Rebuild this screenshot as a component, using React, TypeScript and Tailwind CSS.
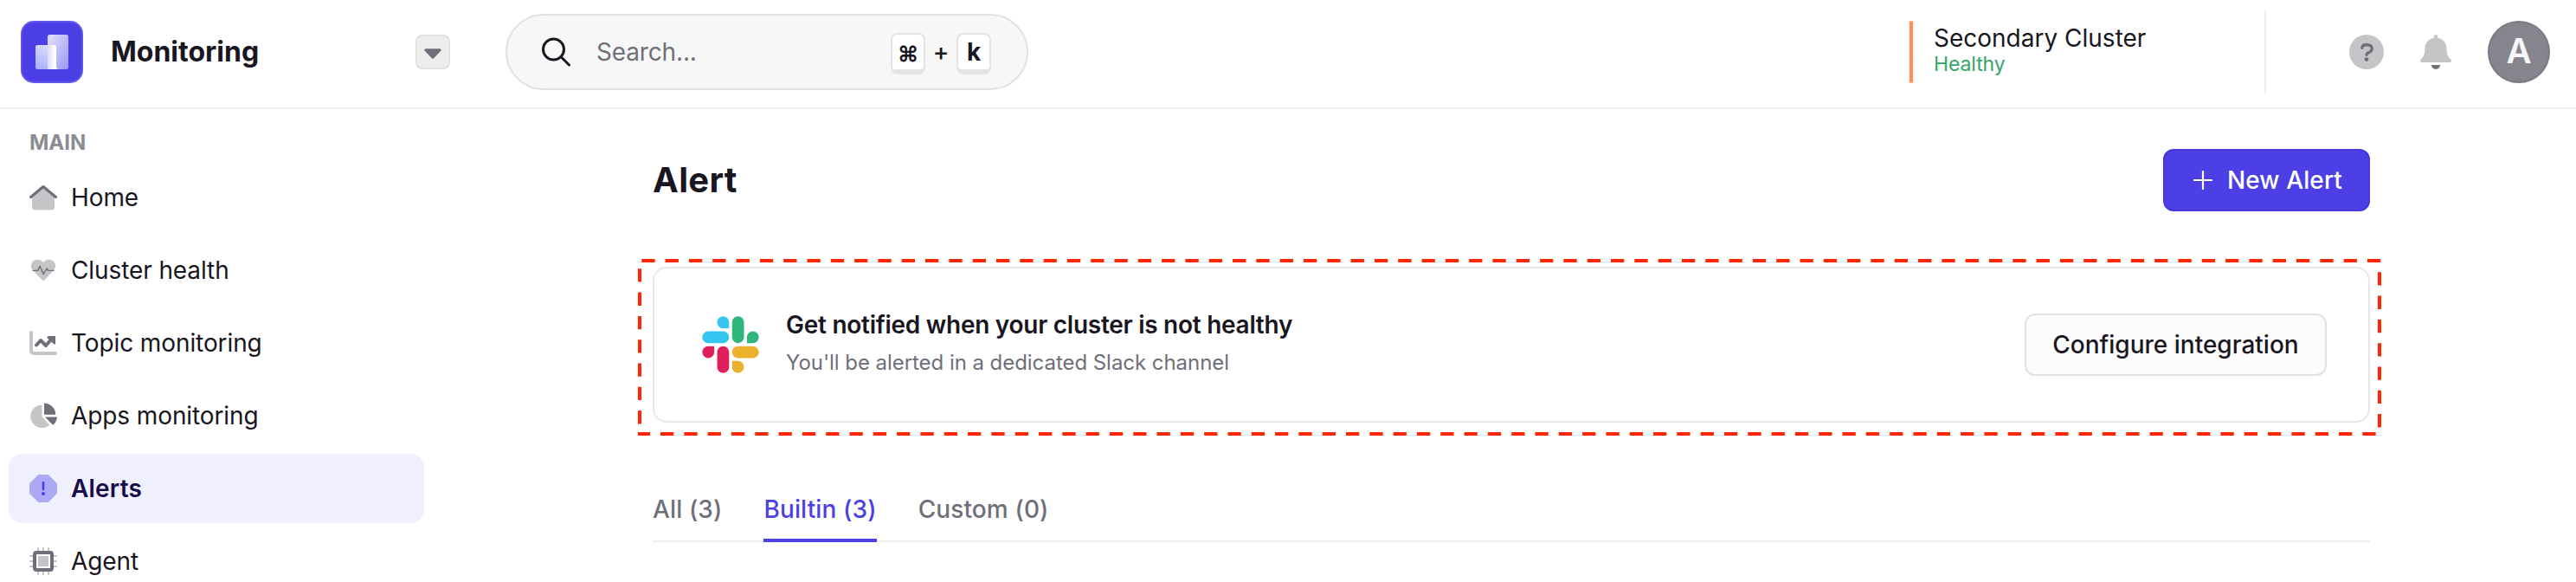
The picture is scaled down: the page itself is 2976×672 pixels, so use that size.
import React from "react";

const DARK = "#6f6f7a";
const LIGHT = "#c5c5c7";

function Logo() {
  return (
    <svg width="72" height="72" viewBox="0 0 72 72">
      <defs>
        <linearGradient id="lgA" x1="0" y1="0" x2="1" y2="1">
          <stop offset="0" stopColor="#e0e0fd" />
          <stop offset="1" stopColor="#9d99f3" />
        </linearGradient>
        <linearGradient id="lgB" x1="0.8" y1="0" x2="0.3" y2="1">
          <stop offset="0" stopColor="#e2e2fe" />
          <stop offset="1" stopColor="#aab2fb" />
        </linearGradient>
        <linearGradient id="lgC" x1="0" y1="0" x2="1" y2="0">
          <stop offset="0" stopColor="#dcdcfc" />
          <stop offset="0.7" stopColor="#ffffff" />
        </linearGradient>
      </defs>
      <rect width="72" height="72" rx="15" fill="#6357e9" />
      <rect x="2" y="2" width="68" height="68" rx="13" fill="#4c3fe5" />
      <rect x="31" y="16" width="24" height="40" rx="2.5" fill="url(#lgA)" />
      <rect x="17" y="28" width="24" height="28" rx="2.5" fill="url(#lgB)" />
      <path d="M31 28h7.500a2.500 2.500 0 0 1 2.500 2.500V54l2 2H33.500a2.500 2.500 0 0 1-2.500-2.500z" fill="url(#lgC)" />
    </svg>
  );
}

function HomeIcon() {
  return (
    <svg width="32" height="32" viewBox="0 0 32 32">
      <path d="M16 5 29 16v10.500a4 4 0 0 1-4 4H7a4 4 0 0 1-4-4V16z" fill={LIGHT} />
      <path d="M1.600 15.500 16 3.500 30.400 15.500" fill="none" stroke={DARK} strokeWidth="3.200" strokeLinecap="round" strokeLinejoin="round" />
    </svg>
  );
}

function HeartIcon() {
  return (
    <svg width="32" height="32" viewBox="0 0 32 32">
      <path d="M16 28.500 4.300 16.800C.8 13.200 1.300 8 4.800 5.300 8.300 2.700 13 3.400 16 7.200c3-3.800 7.700-4.500 11.200-1.900 3.500 2.700 4 7.900.5 11.500z" fill={LIGHT} />
      <path d="M4.200 16.400h5.600l2.200-5 4.200 9 4-6.600 1.400 2.600h6.400" fill="none" stroke={DARK} strokeWidth="1.400" strokeLinecap="round" strokeLinejoin="round" />
    </svg>
  );
}

function ChartIcon() {
  return (
    <svg width="32" height="32" viewBox="0 0 32 32">
      <path d="M2 4v21a3 3 0 0 0 3 3h25" fill="none" stroke={LIGHT} strokeWidth="4" strokeLinecap="round" />
      <path d="M8 18.500 13 13l6 6 7-8" fill="none" stroke={DARK} strokeWidth="4" strokeLinecap="round" strokeLinejoin="round" />
      <path d="M21.500 8h8.500v9.500h-1.500L20.200 10z" fill={DARK} />
    </svg>
  );
}

function PieIcon() {
  return (
    <svg width="32" height="32" viewBox="0 0 32 32">
      <path d="M14.500 3.500V17l8.800 9.800A13.300 13.300 0 1 1 14.500 3.500z" fill={LIGHT} />
      <path d="M17 1.500a13.500 13.500 0 0 1 13.300 13.200H17z" fill={DARK} />
      <path d="M18 17.500h14a13.500 13.500 0 0 1-4.800 9.200z" fill={DARK} />
    </svg>
  );
}

function AlertIcon() {
  return (
    <svg width="32" height="32" viewBox="0 0 32 32">
      <path d="M11.500 0h9a3 3 0 0 1 2 .8l8.700 8.700a3 3 0 0 1 .8 2v9a3 3 0 0 1-.8 2l-8.700 8.700a3 3 0 0 1-2 .8h-9a3 3 0 0 1-2-.8L.8 22.500a3 3 0 0 1-.8-2v-9a3 3 0 0 1 .8-2L9.500.8a3 3 0 0 1 2-.8z" fill="#ada8f6" />
      <path d="M16 9.200v7.800" stroke="#4c3fe5" strokeWidth="2.600" strokeLinecap="round" />
      <circle cx="16" cy="22" r="2" fill="#4c3fe5" />
    </svg>
  );
}

function ChipIcon() {
  return (
    <svg width="32" height="32" viewBox="0 0 32 32">
      <path d="M10 1v30M16 1v30M22 1v30M1 10h30M1 16h30M1 22h30" stroke={LIGHT} strokeWidth="2" strokeLinecap="round" />
      <rect x="6" y="6" width="20" height="20" rx="2" fill="#fff" stroke={DARK} strokeWidth="4" />
      <rect x="10" y="10" width="12" height="12" fill={LIGHT} />
    </svg>
  );
}

const NAV: { label: string; icon: React.ReactNode; active?: boolean }[] = [
  { label: "Home", icon: <HomeIcon /> },
  { label: "Cluster health", icon: <HeartIcon /> },
  { label: "Topic monitoring", icon: <ChartIcon /> },
  { label: "Apps monitoring", icon: <PieIcon /> },
  { label: "Alerts", icon: <AlertIcon />, active: true },
  { label: "Agent", icon: <ChipIcon /> },
];

function SlackLogo() {
  return (
    <svg width="66" height="66" viewBox="0 0 127 127">
      <path d="M27.200 80c0 7.300-5.900 13.200-13.200 13.200S.8 87.300.8 80s5.900-13.200 13.200-13.200h13.200zM33.800 80c0-7.300 5.900-13.200 13.200-13.200s13.200 5.900 13.200 13.200v33c0 7.300-5.900 13.200-13.200 13.200s-13.200-5.900-13.200-13.200z" fill="#E01E5A" />
      <path d="M47 27c-7.300 0-13.200-5.900-13.200-13.200S39.700.6 47 .6s13.200 5.900 13.200 13.200V27zM47 33.700c7.300 0 13.200 5.900 13.200 13.200S54.300 60.100 47 60.100H13.900C6.600 60.100.7 54.200.7 46.900s5.900-13.200 13.200-13.200z" fill="#36C5F0" />
      <path d="M99.900 46.900c0-7.300 5.900-13.200 13.200-13.200s13.200 5.900 13.200 13.200-5.900 13.200-13.200 13.200H99.900zM93.300 46.900c0 7.300-5.900 13.200-13.200 13.200s-13.200-5.900-13.200-13.200V13.800C66.900 6.500 72.800.6 80.100.6s13.200 5.900 13.200 13.200z" fill="#2EB67D" />
      <path d="M80.100 99.800c7.300 0 13.200 5.900 13.200 13.200s-5.900 13.200-13.200 13.200-13.200-5.900-13.200-13.200V99.800zM80.100 93.200c-7.300 0-13.200-5.900-13.200-13.200s5.900-13.200 13.200-13.200h33.100c7.300 0 13.200 5.900 13.200 13.200s-5.900 13.200-13.200 13.200z" fill="#ECB22E" />
    </svg>
  );
}

function Key({ children }: { children: React.ReactNode }) {
  return (
    <span className="flex h-12 w-10 justify-center rounded-lg border-2 border-b-[6px] border-[#e4e3e6] bg-white leading-10 font-bold">
      {children}
    </span>
  );
}

export default function App() {
  return (
    <div className="flex h-[672px] w-[2976px] flex-col overflow-hidden bg-white font-[Inter,sans-serif] text-[28px] text-[#191622]">
      <header className="flex h-[126px] shrink-0 items-start border-b-2 border-[#ededee]">
        <div className="flex h-[120px] w-[584px] items-center pl-6">
          <Logo />
          <h2 className="ml-8 w-[352px] text-[32px] leading-10 font-bold">Monitoring</h2>
          <div className="flex size-10 items-center justify-center rounded-lg border-2 border-[#e1e1e2] bg-[#ededee]">
            <svg width="20" height="12" viewBox="0 0 20 12" className="mt-1">
              <path d="M1.800 1.800h16.400L10 10.200z" fill={DARK} stroke={DARK} strokeWidth="3" strokeLinejoin="round" />
            </svg>
          </div>
        </div>
        <div className="mt-4 flex h-[88px] w-[604px] items-center rounded-full border-2 border-[#e1e1e2] bg-[#f7f7f7] pl-10">
          <svg width="34" height="34" viewBox="0 0 34 34" fill="none" stroke="#191622" strokeWidth="3" strokeLinecap="round">
            <circle cx="13.500" cy="14" r="12" />
            <path d="M22 22.500 31.500 32" />
          </svg>
          <span className="ml-[29px] w-[340px] text-[28px] tracking-[-0.15px] text-[#6f6f7a]">Search...</span>
          <div className="mt-1 flex items-center">
            <Key>
              <span className="pt-0.5 text-[25px]">⌘</span>
            </Key>
            <span className="-mt-1 w-9 text-center text-[28px] leading-10 font-medium">+</span>
            <Key>
              <span className="text-[28px]">k</span>
            </Key>
          </div>
        </div>
        <div className="mt-3 ml-auto flex h-24 w-[412px] items-center border-r-2 border-[#ededee]">
          <div className="h-[72px] w-1 rounded-sm bg-[#ff924f]" />
          <div className="-mt-1 ml-6 flex flex-col">
            <span className="text-[28px] leading-8">Secondary Cluster</span>
            <span className="text-[23px] leading-7 tracking-[-0.1px] text-[#34a568]">Healthy</span>
          </div>
        </div>
        <div className="flex h-[120px] w-[358px] items-center pl-24">
          <svg width="40" height="40" viewBox="0 0 40 40">
            <circle cx="20" cy="20" r="20" fill={LIGHT} />
            <path d="M14.800 15.300c.4-2.400 2-3.600 4.200-3.600h2.200c2.900 0 5.100 1.900 5.100 4.400 0 1.700-.9 2.900-2.400 3.800l-2.400 1.400c-.9.500-1.400 1-1.400 1.900" fill="none" stroke={DARK} strokeWidth="3.400" strokeLinecap="round" />
            <circle cx="20" cy="28.600" r="2.400" fill={DARK} />
          </svg>
          <svg width="36" height="40" viewBox="0 0 36 40" className="ml-[42px]">
            <path d="M18 0a2.200 2.200 0 0 1 2.200 2.200v1.600C26.500 5 30.600 9.800 30.600 16c0 6.500 1 9 4.400 12.300 1.800 1.900.8 3.700-1.400 3.700H2.400C.2 32-.8 30.200 1 28.300 4.400 25 5.400 22.500 5.400 16c0-6.200 4.100-11 10.400-12.200V2.200A2.200 2.200 0 0 1 18 0z" fill={LIGHT} />
            <path d="M13 35h10a5 5 0 0 1-10 0z" fill={DARK} />
          </svg>
          <div className="ml-[42px] flex size-[72px] items-center justify-center rounded-full border-2 border-[#7c7a82] bg-[#86848d] pb-0.5 text-[40px] font-semibold text-[#f7f7f7]">A</div>
        </div>
      </header>
      <div className="flex flex-1">
        <aside className="flex w-[754px] flex-col pl-2.5">
          <div className="mt-[21px] mb-[5px] pl-6 text-2xl leading-9 font-bold text-[#8d8c94]">MAIN</div>
          <nav className="flex flex-col gap-1">
            {NAV.map((n) => (
              <a
                key={n.label}
                className={
                  n.active
                    ? "flex h-20 w-[480px] items-center gap-4 rounded-2xl bg-[#f0effe] pl-6 font-semibold tracking-[0.2px] text-[#160c4a]"
                    : "flex h-20 w-[480px] items-center gap-4 pl-6 tracking-[-0.1px]"
                }
              >
                {n.icon}
                <span>{n.label}</span>
              </a>
            ))}
          </nav>
        </aside>
        <main className="flex w-[1984px] flex-col">
          <div className="mt-[46px] flex h-[72px] items-center justify-between">
            <h1 className="text-[40px] font-bold tracking-[0.3px]">Alert</h1>
            <button className="flex h-[72px] w-[239px] items-center rounded-xl border-2 border-[#4538d6] bg-[#4c3fe5] pl-[33px] font-medium text-white">
              <svg width="22" height="22" viewBox="0 0 22 22" stroke="#fff" strokeWidth="2.200" strokeLinecap="round">
                <path d="M11 1v20M1 11h20" />
              </svg>
              <span className="ml-[17px] tracking-[0.1px]">New Alert</span>
            </button>
          </div>
          <section className="relative mt-16 flex h-[180px] items-center rounded-2xl border-2 border-[#e8e8e9] pl-[55px] pr-12">
            <svg className="absolute -top-[11px] -left-[19px]" width="2016" height="206" fill="none" stroke="#ff2600" strokeWidth="4">
              <path d="M4.300 2H2014" strokeDasharray="15.300 12.010" />
              <path d="M2012 15.300V202" strokeDasharray="15.300 12" />
              <path d="M-1.300 202H2014" strokeDasharray="15.300 12.010" />
              <path d="M2 11.300V202" strokeDasharray="15.300 12" />
            </svg>
            <SlackLogo />
            <div className="ml-[31px] flex flex-1 flex-col pb-[3px]">
              <span className="text-[28px] leading-10 font-semibold tracking-[-0.27px]">Get notified when your cluster is not healthy</span>
              <span className="mt-1 text-2xl leading-10 tracking-[-0.05px] text-[#6f6f7a]">You'll be alerted in a dedicated Slack channel</span>
            </div>
            <button className="h-[72px] w-[349px] rounded-xl border-2 border-[#e1e1e2] bg-[#fcfcfc] font-medium">Configure integration</button>
          </section>
          <div className="mt-16 flex h-[74px] gap-12 border-b-2 border-[#ededee] font-medium tracking-[0.12px] text-[#6f6f7a]">
            <span className="h-[74px] pt-[15px]">All (3)</span>
            <span className="h-[74px] border-b-4 border-[#4c3fe5] pt-[15px] text-[#4c3fe5]">Builtin (3)</span>
            <span className="h-[74px] pt-[15px]">Custom (0)</span>
          </div>
        </main>
      </div>
    </div>
  );
}
